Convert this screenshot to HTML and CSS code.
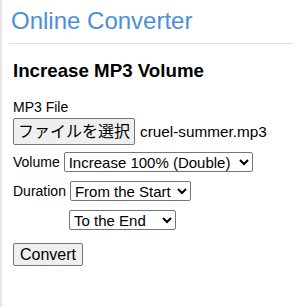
FILE: index.html
```html
<!DOCTYPE html>
<html lang="ja">
<head>
  <meta charset="UTF-8" />
  <title>Online Converter - Increase MP3 Volume</title>
  <link rel="stylesheet" href="styles.css">
</head>
<body>
  <div class="page">
    <h1 class="site-title">Online Converter</h1>
    <hr class="rule">

    <div class="content">
      <h2 class="tool-title">Increase MP3 Volume</h2>

      <div class="field">
        <div class="label">MP3 File</div>
        <div class="file-row">
          <button class="btn file-btn">ファイルを選択</button>
          <span class="file-name">cruel-summer.mp3</span>
        </div>
      </div>

      <div class="row first">
        <span class="label">Volume</span>
        <select class="sel sel-volume">
          <option>Increase 100% (Double)</option>
        </select>
      </div>

      <div class="row">
        <span class="label">Duration</span>
        <select class="sel sel-start">
          <option>From the Start</option>
        </select>
      </div>

      <div class="row indent">
        <select class="sel sel-end">
          <option>To the End</option>
        </select>
      </div>

      <button class="btn convert">Convert</button>
    </div>
  </div>
</body>
</html>
```

FILE: styles.css
```css
body {
  margin: 0;
  font-family: "Liberation Sans", Arial, sans-serif;
  color: #000;
  background: #fff;
}

.page {
  min-height: 100vh;
  border-left: 2px solid #e6e6e6;
  padding-left: 7px;
  box-sizing: border-box;
}

.site-title {
  margin: 0;
  padding: 7px 0 0 2px;
  font-size: 24px;
  font-weight: normal;
  color: #4a90d9;
}

.rule {
  margin: 8px 0 0 0;
  border: 0;
  border-top: 1px solid #e0e0e0;
}

.content {
  padding-left: 4px;
}

.tool-title {
  margin: 16px 0 0 0;
  font-size: 18.72px;
  font-weight: bold;
}

.label {
  font-size: 14px;
}

.field {
  margin-top: 17px;
}

.file-row {
  display: flex;
  align-items: center;
  gap: 5px;
  margin-top: 3px;
}

.file-name {
  font-size: 15.3px;
}

.btn {
  font-family: "Liberation Sans", "Noto Sans CJK JP", Arial, sans-serif;
  font-size: 16px;
  line-height: 1;
  padding: 0 6px;
  border: 1px solid #767676;
  border-radius: 2px;
  background: #efefef;
  color: #000;
}

.file-btn {
  height: 27px;
  padding: 0 4px;
}

.row {
  display: flex;
  align-items: center;
  gap: 4px;
  margin-top: 9px;
}

.row.first {
  margin-top: 7px;
}

.indent {
  padding-left: 56px;
}

.sel {
  height: 20px;
  padding: 0;
  font-family: "Liberation Sans", Arial, sans-serif;
  font-size: 15px;
  color: #000;
  background: #fff;
  border: 1px solid #767676;
  border-radius: 2px;
}

.sel-volume {
  width: 189px;
}

.sel-start {
  width: 121px;
}

.sel-end {
  width: 107px;
}

.convert {
  height: 23px;
  margin-top: 13px;
}
```
